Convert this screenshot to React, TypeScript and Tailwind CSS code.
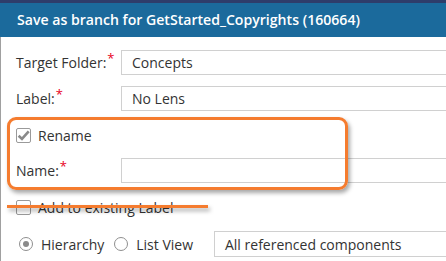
import React from 'react';

const Required: React.FC = () => (
    <span className="relative -top-[5px] ml-[1px] text-[13px] leading-none text-[#e8001c]">*</span>
);

const FieldRow: React.FC<{ label: string; value?: string }> = ({ label, value }) => (
    <div className="flex h-[25px] items-center">
        <label className="w-[120px] shrink-0 whitespace-nowrap pl-[15px] text-[14px] text-[#333]">
            {label}
            <Required />
        </label>
        <div className="flex h-[25px] flex-1 items-center border border-r-0 border-[#d0d0d0] pl-[10px] text-[14px] text-[#333]">
            {value}
        </div>
    </div>
);

const CheckBox: React.FC<{ checked?: boolean }> = ({ checked }) => (
    <span className="flex h-[15px] w-[15px] items-center justify-center rounded-[2px] border border-[#9a9a9a] bg-white">
        {checked && (
            <svg width="13" height="13" viewBox="0 0 12 12">
                <path d="M1.5 6.2 L4.6 9.2 L10.8 2.2" fill="none" stroke="#8a8a8a" strokeWidth="2.4" />
            </svg>
        )}
    </span>
);

const Radio: React.FC<{ checked?: boolean }> = ({ checked }) => (
    <span className="flex h-[14px] w-[14px] items-center justify-center rounded-full border-[1.5px] border-[#8f8f8f] bg-white">
        {checked && <span className="h-[6px] w-[6px] rounded-full bg-[#8a8a8a]" />}
    </span>
);

export default function App() {
    return (
        <div className="relative h-[261px] w-[446px] overflow-hidden bg-white" style={{ fontFamily: '"Open Sans", sans-serif' }}>
            <div className="h-[3px] bg-[#2e3d6b]" />
            <div className="flex h-[34px] items-center bg-[#1b6a9c] pl-[17px] text-[14.1px] font-semibold text-white">
                Save as branch for GetStarted_Copyrights (160664)
            </div>
            <div className="flex h-[224px] flex-col border-l border-[#a0a0a0]">
                <div className="h-[13px]" />
                <FieldRow label="Target Folder:" value="Concepts" />
                <div className="h-[11px]" />
                <FieldRow label="Label:" value="No Lens" />
                <div className="flex h-[47px] items-center gap-[7px] pl-[15px] pt-[1px] text-[14px] text-[#333]">
                    <CheckBox checked />
                    <span>Rename</span>
                </div>
                <FieldRow label="Name:" />
                <div className="flex h-[48px] items-center gap-[7px] pl-[15px] pt-[1px] text-[14px] text-[#333]">
                    <CheckBox />
                    <span>Add to existing Label</span>
                </div>
                <div className="flex h-[26px] items-center text-[14px] text-[#333]">
                    <div className="flex items-center gap-[8px] pl-[18px]">
                        <Radio checked />
                        <span>Hierarchy</span>
                    </div>
                    <div className="ml-[10px] flex items-center gap-[8px]">
                        <Radio />
                        <span>List View</span>
                    </div>
                    <div className="ml-[21px] flex h-[26px] flex-1 items-center border border-r-0 border-[#d0d0d0] pl-[10px]">
                        All referenced components
                    </div>
                </div>
            </div>
            {/* annotation overlays */}
            <div className="absolute left-[7px] top-[117px] h-[73px] w-[341px] rounded-[9px] border-[3px] border-[#f57c2f] shadow-[2px_3px_4px_rgba(0,0,0,0.35)]" />
            <div className="absolute left-[7px] top-[205px] h-[3px] w-[201px] bg-[#f57c2f] shadow-[2px_3px_4px_rgba(0,0,0,0.35)]" />
        </div>
    );
}
